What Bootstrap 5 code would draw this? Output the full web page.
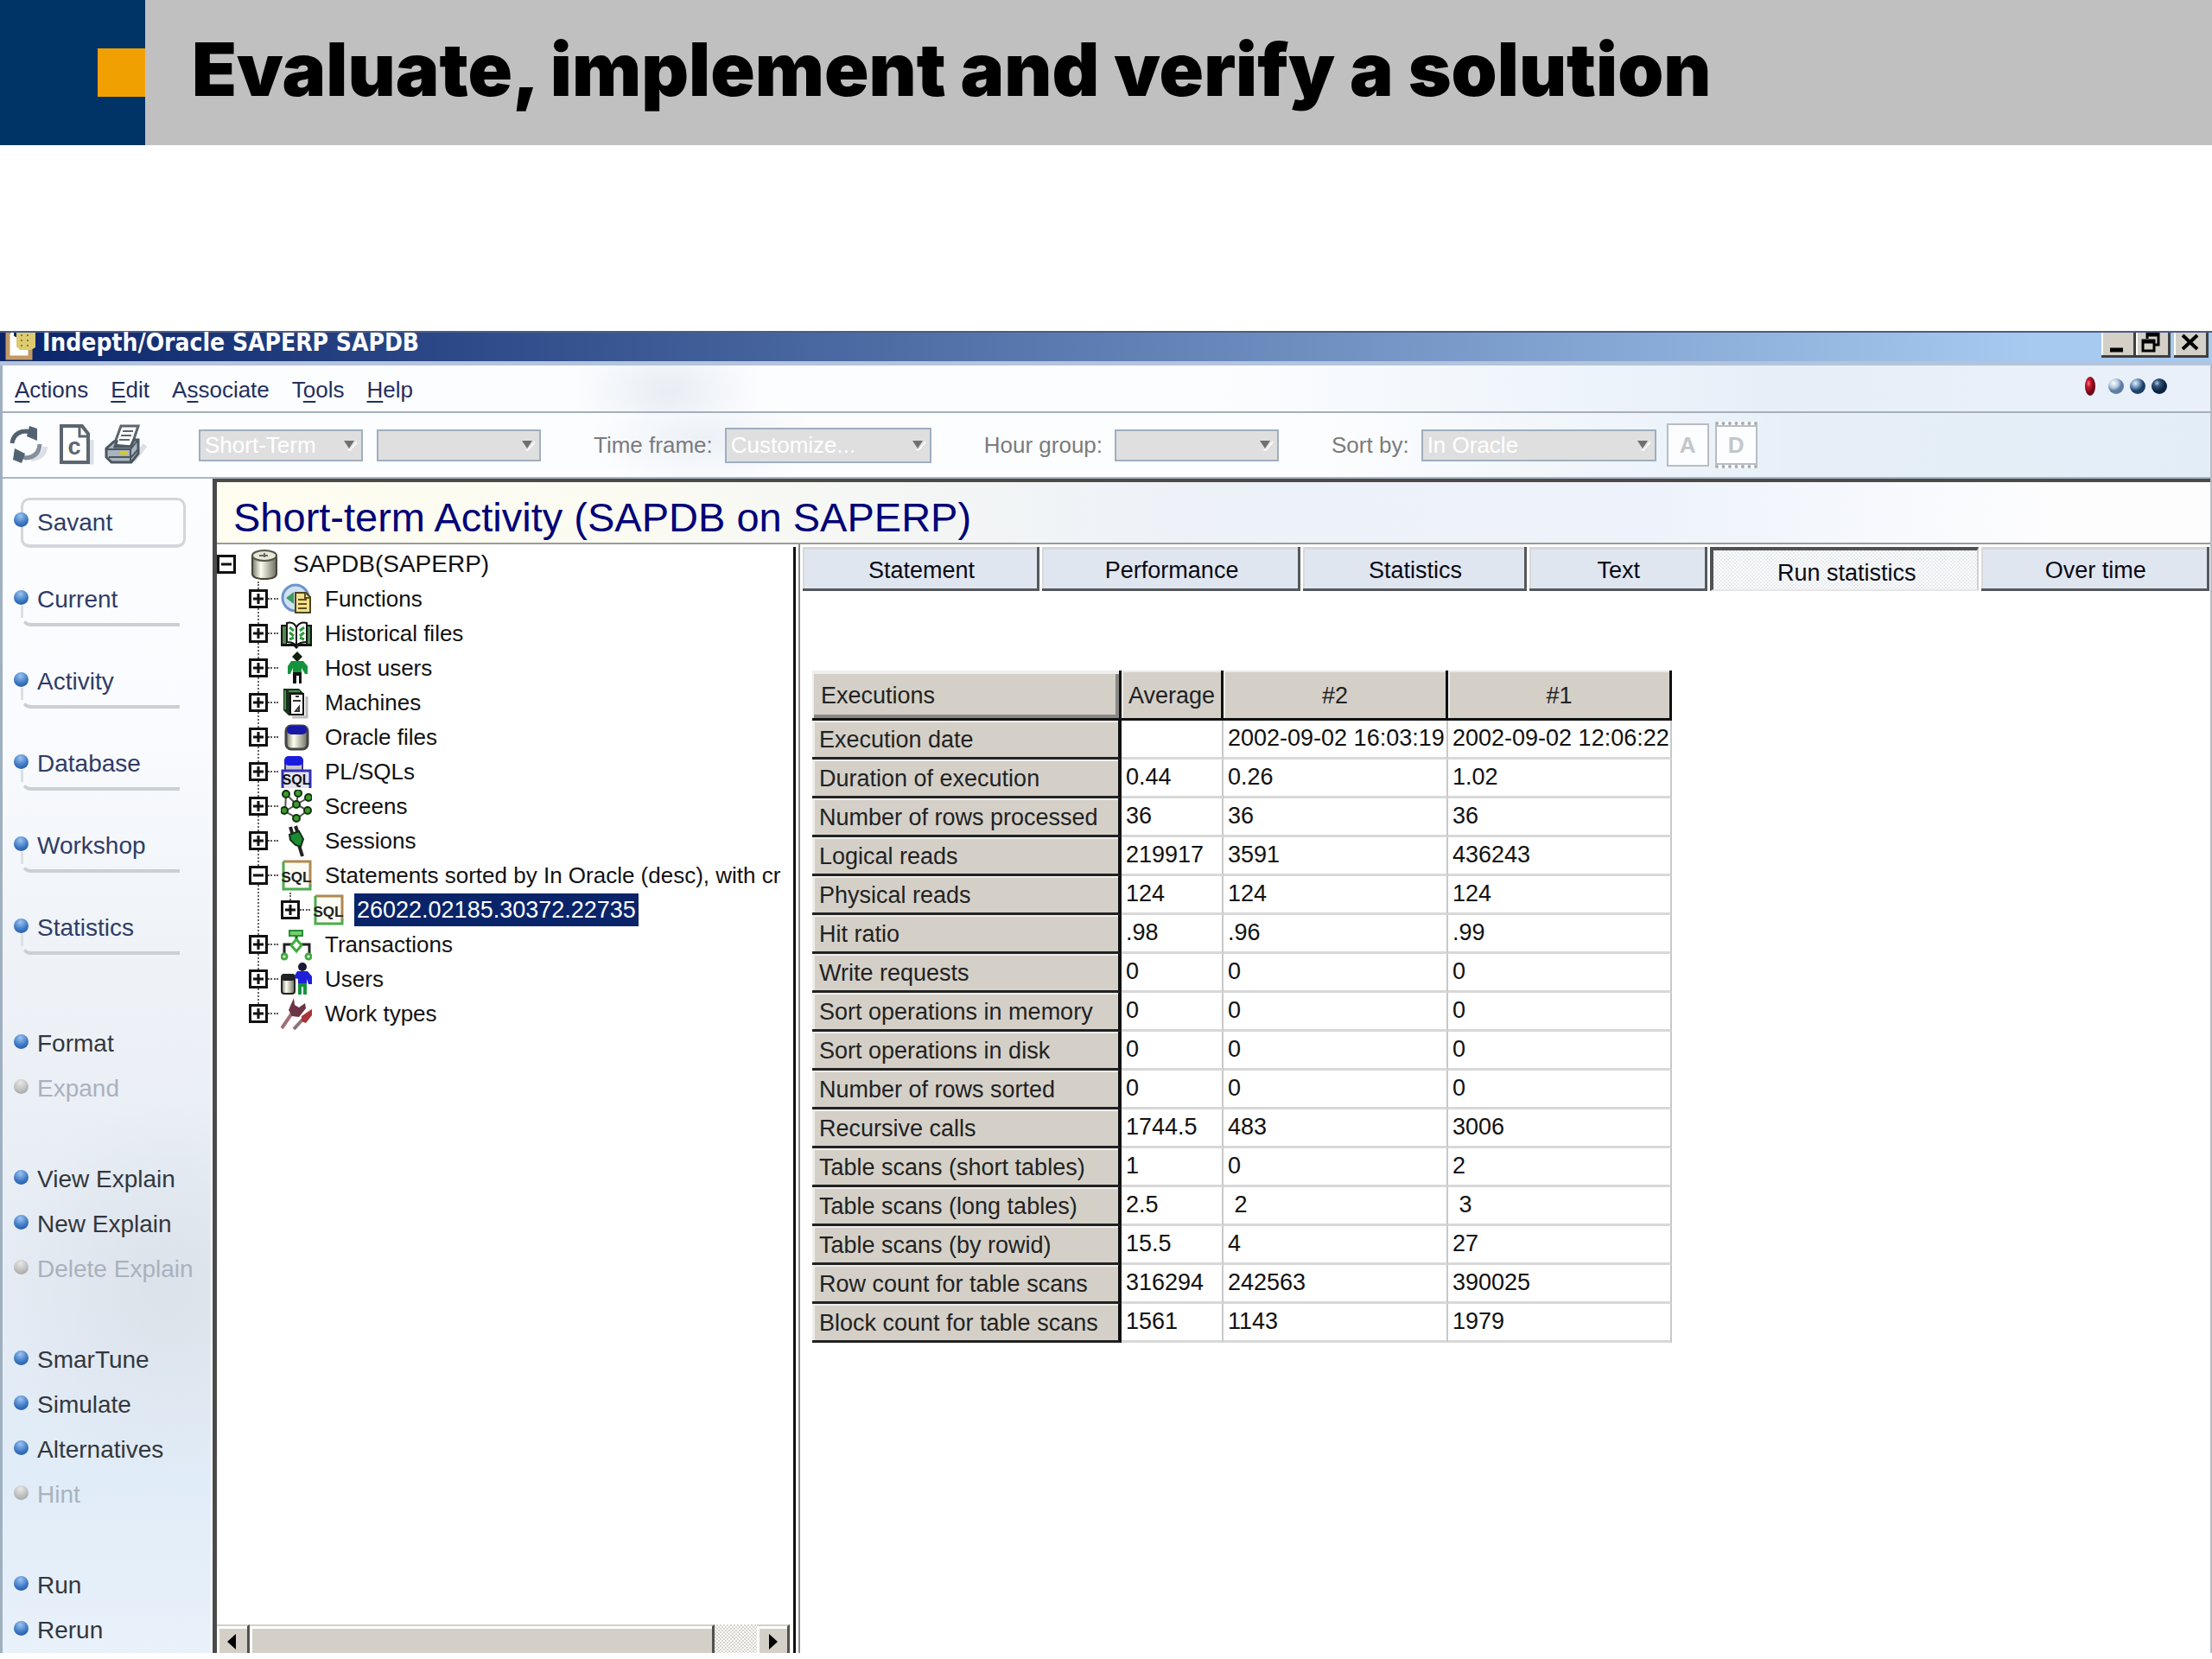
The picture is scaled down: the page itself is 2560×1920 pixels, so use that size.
<!DOCTYPE html>
<html lang="en">
<head>
<meta charset="utf-8">
<meta name="viewport" content="width=device-width, initial-scale=1">
<title>Indepth/Oracle SAPERP SAPDB</title>
<link rel="stylesheet" href="https://cdn.jsdelivr.net/npm/bootstrap@5.3.0/dist/css/bootstrap.min.css">
<style>
  body { font-family: "Liberation Sans", Arial, sans-serif; font-size: 27px; line-height: 32px; color: #111; background: #fff; padding-bottom: 7px; }
  button { font: inherit; color: inherit; padding: 0; }

  /* slide heading */
  .slide-head { height: 168px; background: #c0c0c0; margin-bottom: 215px; }
  .slide-mark { width: 168px; background: #003366; }
  .slide-mark span { width: 55px; height: 56px; background: #f0a000; }
  .slide-head h1 { font-family: Inter, "Liberation Sans", sans-serif; font-weight: 900; font-size: 85px; line-height: 96px; color: #000; margin: 0 0 6px 54px; }

  /* window frame */
  .title-bar { height: 40px; background: linear-gradient(90deg, #0a246a, #a6caf0 92%); border-top: 2px solid #4c5c84; border-bottom: 5px solid #b4c4dc; color: #fff; }
  .title-bar h2 { font-family: "DejaVu Sans Condensed", "DejaVu Sans", sans-serif; font-weight: 700; font-size: 28px; line-height: 24px; }
  .app-icon { width: 38px; height: 32px; margin: 0 7px 0 4px; }
  .win-btn { width: 40px; height: 29px; background: #d4d0c8; border: 0 solid #404040; border-width: 0 3px 3px 0; box-shadow: inset 2px 0 #fff; }
  .window-body { border-left: 3px solid #9fb0c0; border-right: 2px solid #b8bcc4; }
  .menu-bar { height: 55px; padding: 2px 50px 0 14px; color: #22305c; border-bottom: 2px solid #a4b0ba; font-size: 26px;
    background: radial-gradient(ellipse 110px 70px at 770px 30px, #e8edf3, #e8edf300), linear-gradient(90deg, #fcfdff 55%, #e6eff8 80%, #e9f0f9); }
  .menu-bar a { color: inherit; text-decoration: none; }
  .menu-bar u { text-underline-offset: 4px; }
  .tool-bar { height: 76px; padding-left: 7px; font-size: 26px; color: #7b7b7b; border-bottom: 2px solid #a9b6c2;
    background: radial-gradient(ellipse 130px 60px at 810px 30px, #ecf1f7, #ecf1f700), linear-gradient(90deg, #fcfdff 60%, #e6eff8 82%, #e3edf7); }
  .tool-bar select { height: 37px; width: 190px; padding: 0 30px 0 5px; font-size: 26px; line-height: 30px; border: 2px solid #9eafc0; border-radius: 0; color: #fff; opacity: 1;
    background: #dfdfe0 url("data:image/svg+xml,%3Csvg xmlns='http://www.w3.org/2000/svg' width='18' height='14'%3E%3Cpath d='M4 12h4l8-10v3l-8 9z' fill='%23fff'/%3E%3Cpath d='M1 2h12l-6 9z' fill='%23707070'/%3E%3C/svg%3E") no-repeat right 3px center; background-size: 18px 14px; }
  .tool-bar select:disabled { color: #fff; background-color: #dfdfe0; }
  .tool-bar label { padding: 0 14px 0 61px; }
  .tool-bar select.sel-time { width: 239px; height: 41px; }
  .tool-bar select.sel-sort { width: 272px; }
  .tool-ico { width: 46px; height: 52px; background: none; border: 0; }
  .sort-btn { width: 49px; height: 50px; background: #fcfdff; border: 2px solid #b9bdc2; color: #c3c6ca; font-weight: 700; }
  .sort-btn.sort-asc { margin: 0 7px 0 12px; }
  .sort-btn.sort-desc { border-top: 4px dotted #a8acb0; border-bottom: 4px dotted #a8acb0; height: 54px; box-shadow: inset 0 2px #b9bdc2, inset 0 -2px #b9bdc2; }

  /* side navigation */
  .side-nav { width: 243px; font-size: 28px; border-right: 2px solid #fff;
    background: radial-gradient(ellipse 200px 220px at 190px 940px, #dbe2ea, #dbe2ea00), linear-gradient(180deg, #fbfdff, #f9fbfe 22%, #eef2f7 42%, #e6ecf4 68%, #e0ecf8 85%, #e9f1fa); }
  .side-nav a { color: #33373d; text-decoration: none; padding: 2px 0 0 10px; }
  .side-nav a.off { color: #a9b2bd; }
  .side-nav .nav-cmd { height: 52px; }
  .side-nav .cmd-gap { margin-top: 53px; }
  .side-nav .cmd-first { margin-top: 76px; }
  .side-nav .nav-view { height: 58px; margin-top: 37px; }
  .side-nav .nav-view a { color: #2f3c66; }
  .side-nav .nav-view.view-top { margin-top: 22px; }
  .side-nav .nav-view.view-next { margin-top: 33px; }
  .side-nav .line-box { width: 184px; height: 58px; margin-left: 21px; border: 0 solid #cbced3; border-left: 3px solid transparent; border-bottom-width: 4px; border-radius: 4px 0 0 12px; padding-bottom: 2px; background: linear-gradient(#dcdfe3, #dcdfe3) no-repeat -3px 34px / 3px 14px; }
  .side-nav .line-box a { padding-left: 3px; }
  .line-box::before, .ball { content: ""; width: 17px; height: 17px; border-radius: 50%; flex: none; background: radial-gradient(circle at 45% 25%, #9cc4f0, #3c78c4 55%, #1d4a94); }
  .line-box::before { margin: 0 7px 4px -11px; }
  .side-nav .box-full { width: 191px; border: 3px solid #d3d6da; border-bottom-width: 4px; border-radius: 10px; background: #fbfdff; }
  .ball { margin: 0 0 4px 13px; }
  .ball.off { background: radial-gradient(circle at 45% 25%, #e8e8e8, #bdbdbd 55%, #9a9a9a); }

  /* main area */
  .main-area { border-left: 5px solid #4a4a4a; }
  .page-title { height: 76px; border-top: 4px solid #4a4a48; border-bottom: 2px solid #9a9a9a; padding: 11px 0 0 19px; background: linear-gradient(90deg, #fffdf0, #fbfbf2 20%, #edf1f8 50%, #eef3fb 72%, #fdfdfe 92%); }
  .page-title h3 { font-size: 47px; line-height: 56px; color: #000078; font-weight: 400; }
  .tree-pane { width: 675px; border-right: 2px solid #8c8c8c; padding-top: 3px; font-size: 26px; }
  .tree-inner { border-right: 3px solid #111; margin-right: 3px; }
  .tree-inner ul { list-style: none; margin: 0; padding: 0; }
  .tree-inner ul ul { padding-left: 37px; position: relative; }
  .tree-inner ul ul::before { content: ""; position: absolute; left: 47px; top: 0; bottom: 20px; border-left: 2px dotted #666; }
  .tree-inner ul ul ul::before { bottom: auto; height: 12px; }
  .tree-row { height: 40px; white-space: nowrap; position: relative; }
  .twist { width: 22px; height: 22px; border: 3px solid #111; background: #fff; flex: none; display: flex; }
  .twist svg { width: 16px; height: 16px; }
  .dash { width: 12px; height: 2px; border-top: 2px dotted #555; margin-right: 3px; flex: none; }
  .tree-row .t-ico { width: 36px; height: 38px; margin-right: 12px; flex: none; }
  .node-name { padding: 0 3px; line-height: 38px; }
  .node-name.root-name { font-size: 28px; }
  .node-name.picked { background: #0a246a; color: #fff; font-size: 27px; }

  .scroll-strip { height: 33px; margin-right: 4px; background: repeating-conic-gradient(#d8d4cc 0 25%, #fff 0 50%) 0 0 / 4px 4px; }
  .scroll-strip button, .scroll-thumb { border: 0 solid #505050; border-top: 2px solid #d4d0c8; border-right-width: 3px; background: #d4d0c8; box-shadow: inset 3px 3px #fff; }
  .scroll-strip button { width: 38px; }
  .scroll-thumb { width: 538px; }

  .tab-strip { padding: 3px 1px 0 3px; gap: 3px; height: 54px; }
  .tab-strip button { border: 0 solid #55585c; border-right-width: 3px; border-bottom-width: 3px; padding: 6px 0 0 4px; background: #e0e6ef; box-shadow: inset 2px 3px #d8d8d8; min-width: 0; white-space: nowrap; color: #0a0a14; }
  .tab-strip .tab-on { background: repeating-conic-gradient(#e8ebef 0 25%, #fbfcfd 0 50%) 0 0 / 4px 4px; border-width: 4px 2px 2px 4px; border-color: #505254 #d0d0d0 #e6e6e6 #505254; box-shadow: none; }

  .stat-grid { border-collapse: separate; border-spacing: 0; margin: 92px 0 0 14px; width: 995px; table-layout: fixed; line-height: 30px; }
  .stat-grid th { font-weight: 400; background: #d4d0c8; color: #222; }
  .stat-grid thead th { height: 58px; border-right: 3px solid #111; border-bottom: 3px solid #111; padding: 2px 3px 0 4px; text-align: center; box-shadow: inset 2px 2px #eceae6; }
  .stat-grid thead th:first-child { text-align: left; padding-left: 10px; box-shadow: inset 2px 4px #eee, inset -4px -4px #8a8884; }
  .stat-grid tbody th { height: 45px; padding: 2px 0 0 8px; border-right: 4px solid #111; border-bottom: 3px solid #222; box-shadow: inset 3px 2px #efedea; white-space: nowrap; }
  .stat-grid td { padding: 0 0 3px 5px; border-right: 2px solid #c8c8c8; border-bottom: 3px solid #d8d8d8; white-space: nowrap; color: #111; }
</style>
<script src="https://cdn.jsdelivr.net/npm/bootstrap@5.3.0/dist/js/bootstrap.bundle.min.js"></script>
</head>
<body class="d-flex flex-column min-vh-100">

<svg width="0" height="0" class="position-absolute" aria-hidden="true">
  <defs>
    <linearGradient id="steel"><stop offset="0" stop-color="#77776c"/><stop offset=".35" stop-color="#fffff0"/><stop offset="1" stop-color="#6c6c60"/></linearGradient>
    <radialGradient id="red" cx=".35" cy=".35"><stop offset="0" stop-color="#f08090"/><stop offset=".4" stop-color="#c81830"/><stop offset="1" stop-color="#700818"/></radialGradient>
    <radialGradient id="b1" cx=".35" cy=".3"><stop offset="0" stop-color="#fff"/><stop offset=".6" stop-color="#b4c8e0"/><stop offset="1" stop-color="#5c7ca4"/></radialGradient>
    <radialGradient id="b2" cx=".35" cy=".3"><stop offset="0" stop-color="#e4f0fc"/><stop offset=".5" stop-color="#7ca0c4"/><stop offset="1" stop-color="#1c4068"/></radialGradient>
    <radialGradient id="b3" cx=".35" cy=".3"><stop offset="0" stop-color="#b4cce4"/><stop offset=".4" stop-color="#34587c"/><stop offset="1" stop-color="#0c2444"/></radialGradient>
    <symbol id="plus" viewBox="0 0 16 16"><path d="M8 2v12M2 8h12" stroke="#111" stroke-width="3"/></symbol>
    <symbol id="minus" viewBox="0 0 16 16"><path d="M2 8h12" stroke="#111" stroke-width="3"/></symbol>
    <symbol id="sql" viewBox="0 0 36 38"><path d="M3 36V3h30v33z" fill="#fbfbf4"/><path d="M3 3h31v28" fill="none" stroke="#b08850" stroke-width="3"/><path d="M3 3v32h31v-5" fill="none" stroke="#4cac4c" stroke-width="3"/><text x="18" y="27" text-anchor="middle" font-family="Liberation Sans" font-size="17" font-weight="700" fill="#222">SQL</text></symbol>
  </defs>
</svg>

<header class="slide-head d-flex flex-shrink-0">
  <div class="slide-mark d-flex justify-content-end flex-shrink-0"><span class="mt-auto mb-auto"></span></div>
  <h1 class="align-self-center text-nowrap">Evaluate, implement and verify a solution</h1>
</header>

<div class="d-flex flex-column flex-grow-1">
  <div class="title-bar d-flex align-items-start flex-shrink-0 pe-1">
    <svg class="app-icon" viewBox="0 0 38 32"><path d="M5 0v29h26V14" fill="#fff" stroke="#c49a64" stroke-width="5"/><path d="M12 0v16h10v8H8V0z" fill="#fff"/><path d="M15 0h22v17l-5 3H19l-4-4z" fill="#dccb70"/><path d="M21 2v14M28 2v14" stroke="#8e7a20" stroke-width="2" stroke-dasharray="2 4"/></svg>
    <h2 class="m-0 me-auto">Indepth/Oracle SAPERP SAPDB</h2>
    <button class="win-btn d-flex" aria-label="Minimize"><svg width="37" height="26"><path d="M10 20h15" stroke="#000" stroke-width="5"/></svg></button>
    <button class="win-btn d-flex me-1" aria-label="Restore"><svg width="37" height="26"><path d="M13 7V1h13v13h-5M13 3h13M8 9h13v12H8zM8 11h13" fill="none" stroke="#000" stroke-width="3"/></svg></button>
    <button class="win-btn d-flex" aria-label="Close"><svg width="37" height="26"><path d="M10 3l17 16M27 3L10 19" stroke="#000" stroke-width="4"/></svg></button>
  </div>

  <div class="window-body d-flex flex-column flex-grow-1">
    <nav class="menu-bar d-flex align-items-center flex-shrink-0">
      <div class="d-flex me-auto" style="gap:26px">
        <a href="#"><u>A</u>ctions</a><a href="#"><u>E</u>dit</a><a href="#">A<u>s</u>sociate</a><a href="#">T<u>o</u>ols</a><a href="#"><u>H</u>elp</a>
      </div>
      <svg width="100" height="32" viewBox="0 0 100 32" aria-hidden="true"><ellipse cx="11" cy="12" rx="6" ry="11" fill="url(#red)"/><circle cx="41" cy="12" r="9" fill="url(#b1)"/><circle cx="66" cy="12" r="9" fill="url(#b2)"/><circle cx="91" cy="12" r="9" fill="url(#b3)"/></svg>
    </nav>

    <form class="tool-bar d-flex align-items-center flex-shrink-0 text-nowrap">
      <button type="button" class="tool-ico" aria-label="Refresh"><svg width="46" height="52"><path d="M26 42q16-2 16-14" stroke="#dce0e6" stroke-width="6" fill="none"/><path d="M4 24Q6 10 21 10l8 3" fill="none" stroke="#526270" stroke-width="5"/><path d="M24 4l9 3v14l-12-5z" fill="#526270"/><path d="M36 25q-1 15-16 16l-8-3" fill="none" stroke="#84909c" stroke-width="5"/><path d="M15 47L5 43l2-13 12 6z" fill="#526270"/></svg></button>
      <button type="button" class="tool-ico ms-2" aria-label="Copy"><svg width="46" height="52"><path d="M10 46h32V20" fill="none" stroke="#dce0e6" stroke-width="5"/><path d="M7 4h24l7 9v33H7z" fill="#fff" stroke="#5c6670" stroke-width="4"/><path d="M28 4v12h10" fill="none" stroke="#5c6670" stroke-width="3"/><text x="22" y="37" text-anchor="middle" font-family="Liberation Sans" font-size="27" font-weight="700" fill="#5c6670">c</text></svg></button>
      <button type="button" class="tool-ico ms-2" aria-label="Print"><svg width="52" height="52" viewBox="0 0 52 52"><path d="M36 44l14-18" stroke="#dce0e6" stroke-width="6"/><path d="M14 26L22 4h20l-8 24z" fill="#fff" stroke="#5c6670" stroke-width="3"/><path d="M24 10h12M22 15h12M20 20h12" stroke="#5c6670" stroke-width="2"/><path d="M5 30l9-8h3l-2 6h18l4-8h5v16l-8 10H11l-6-6z" fill="#aab4be" stroke="#4c5660" stroke-width="3"/><path d="M5 31h28l8-10M8 40h26l8-9M33 31v14" fill="none" stroke="#4c5660" stroke-width="2"/><path d="M21 35h9" stroke="#d8cc20" stroke-width="4"/></svg></button>
      <select class="form-select" aria-label="Term" disabled style="margin-left:66px"><option>Short-Term</option></select>
      <select class="form-select ms-3" aria-label="Period" disabled><option></option></select>
      <label for="tf">Time frame:</label><select id="tf" class="form-select sel-time" disabled><option>Customize...</option></select>
      <label for="hg">Hour group:</label><select id="hg" class="form-select" disabled><option></option></select>
      <label for="sb">Sort by:</label><select id="sb" class="form-select sel-sort" disabled><option>In Oracle</option></select>
      <button type="button" class="sort-btn sort-asc" disabled>A</button><button type="button" class="sort-btn sort-desc" disabled>D</button>
    </form>

    <div class="d-flex flex-grow-1">
      <nav class="side-nav d-flex flex-column flex-shrink-0 text-nowrap">
        <div class="nav-view view-top"><div class="line-box box-full d-flex align-items-center"><a href="#">Savant</a></div></div>
        <div class="nav-view view-next"><div class="line-box d-flex align-items-center"><a href="#">Current</a></div></div>
        <div class="nav-view"><div class="line-box d-flex align-items-center"><a href="#">Activity</a></div></div>
        <div class="nav-view"><div class="line-box d-flex align-items-center"><a href="#">Database</a></div></div>
        <div class="nav-view"><div class="line-box d-flex align-items-center"><a href="#">Workshop</a></div></div>
        <div class="nav-view"><div class="line-box d-flex align-items-center"><a href="#">Statistics</a></div></div>
        <div class="nav-cmd cmd-first d-flex align-items-center"><span class="ball"></span><a href="#">Format</a></div>
        <div class="nav-cmd d-flex align-items-center"><span class="ball off"></span><a href="#" class="off">Expand</a></div>
        <div class="nav-cmd cmd-gap d-flex align-items-center"><span class="ball"></span><a href="#">View Explain</a></div>
        <div class="nav-cmd d-flex align-items-center"><span class="ball"></span><a href="#">New Explain</a></div>
        <div class="nav-cmd d-flex align-items-center"><span class="ball off"></span><a href="#" class="off">Delete Explain</a></div>
        <div class="nav-cmd cmd-gap d-flex align-items-center"><span class="ball"></span><a href="#">SmarTune</a></div>
        <div class="nav-cmd d-flex align-items-center"><span class="ball"></span><a href="#">Simulate</a></div>
        <div class="nav-cmd d-flex align-items-center"><span class="ball"></span><a href="#">Alternatives</a></div>
        <div class="nav-cmd d-flex align-items-center"><span class="ball off"></span><a href="#" class="off">Hint</a></div>
        <div class="nav-cmd cmd-gap d-flex align-items-center"><span class="ball"></span><a href="#">Run</a></div>
        <div class="nav-cmd d-flex align-items-center"><span class="ball"></span><a href="#">Rerun</a></div>
      </nav>

      <main class="main-area d-flex flex-column flex-grow-1">
        <div class="page-title d-flex align-items-center"><h3 class="m-0">Short-term Activity (SAPDB on SAPERP)</h3></div>
        <div class="d-flex flex-grow-1">
          <section class="tree-pane d-flex flex-column flex-shrink-0">
            <div class="tree-inner d-flex flex-column flex-grow-1">
              <ul class="flex-grow-1">
                <li>
                  <div class="tree-row d-flex align-items-center"><button class="twist" aria-label="Collapse"><svg><use href="#minus"/></svg></button><span class="dash border-0"></span><svg class="t-ico" viewBox="0 0 36 38"><path d="M4 9v21q0 6 14 6t14-6V9z" fill="url(#steel)" stroke="#444438" stroke-width="2"/><ellipse cx="18" cy="9" rx="14" ry="6" fill="#e8e8d8" stroke="#55554a" stroke-width="2"/><path d="M12 9h10M18 6v5" stroke="#666" stroke-width="2"/></svg><span class="node-name root-name">SAPDB(SAPERP)</span></div>
                  <ul>
                    <li class="tree-row d-flex align-items-center"><button class="twist" aria-label="Expand"><svg><use href="#plus"/></svg></button><span class="dash"></span><svg class="t-ico" viewBox="0 0 36 38"><circle cx="17" cy="18" r="15" fill="#cfe0f4" stroke="#6c94c8" stroke-width="3"/><path d="M6 18l9-7v14z" fill="#3c9c5c"/><path d="M17 12h12l5 5v18H17z" fill="#f4e08c" stroke="#4c4420" stroke-width="2"/><path d="M20 20h10M20 25h10M20 30h10M28 12v6h6" stroke="#5c5020" stroke-width="2" fill="none"/></svg><span class="node-name">Functions</span></li>
                    <li class="tree-row d-flex align-items-center"><button class="twist" aria-label="Expand"><svg><use href="#plus"/></svg></button><span class="dash"></span><svg class="t-ico" viewBox="0 0 36 38"><path d="M0 9h7v22h10l2 3 2-3h8V9h7v25H21l-3 3-3-3H0z" fill="#111"/><path d="M2 11h4v20H2zM31 11h3v20h-3z" fill="#4c8c50"/><path d="M7 7q8-2 11 5 4-7 12-5v22q-8 0-12 4-4-4-11-4z" fill="#fff" stroke="#111" stroke-width="2"/><path d="M10 12l5 4M10 18l5 4M10 26l5-2M27 12l-5 4M27 18l-5 4M27 26l-5-2" stroke="#2c9c3c" stroke-width="3"/><path d="M18 12v20" stroke="#111" stroke-width="2"/></svg><span class="node-name">Historical files</span></li>
                    <li class="tree-row d-flex align-items-center"><button class="twist" aria-label="Expand"><svg><use href="#plus"/></svg></button><span class="dash"></span><svg class="t-ico" viewBox="0 0 36 38"><path d="M19 0l6 6-6 6-6-6z" fill="#102010"/><path d="M12 11h14l5 6v9h-3l-4-7v6H14v-6l-3 7H8v-9z" fill="#14943c"/><path d="M14 24h10v13h-3V28h-3v9h-4z" fill="#111"/></svg><span class="node-name">Host users</span></li>
                    <li class="tree-row d-flex align-items-center"><button class="twist" aria-label="Expand"><svg><use href="#plus"/></svg></button><span class="dash"></span><svg class="t-ico" viewBox="0 0 36 38"><path d="M13 36h17V12" stroke="#bbb" stroke-width="3" fill="none"/><path d="M3 3h18l6 6v25H9l-6-6z" fill="#18301c"/><path d="M5 5v22M9 6h13" stroke="#489050" stroke-width="2"/><path d="M11 9h15v24H11z" fill="#fff" stroke="#111" stroke-width="2"/><path d="M14 17h9M17 12h4M17 29l4-5v5z" stroke="#333" stroke-width="2" fill="none"/></svg><span class="node-name">Machines</span></li>
                    <li class="tree-row d-flex align-items-center"><button class="twist" aria-label="Expand"><svg><use href="#plus"/></svg></button><span class="dash"></span><svg class="t-ico" viewBox="0 0 36 38"><rect x="6" y="6" width="25" height="27" rx="6" fill="url(#steel)" stroke="#444" stroke-width="3"/><rect x="7" y="6" width="23" height="10" rx="5" fill="#1818a8"/></svg><span class="node-name">Oracle files</span></li>
                    <li class="tree-row d-flex align-items-center"><button class="twist" aria-label="Expand"><svg><use href="#plus"/></svg></button><span class="dash"></span><svg class="t-ico" viewBox="0 0 36 38"><rect x="5" y="2" width="20" height="22" rx="6" fill="#c4c4cc" stroke="#3c3c8c" stroke-width="2"/><rect x="4" y="1" width="22" height="11" rx="5" fill="#1c1ce0"/><path d="M2 38V18h32v20" fill="#e4e4f4" stroke="#3030b8" stroke-width="3"/><text x="18" y="34" text-anchor="middle" font-family="Liberation Sans" font-size="16" font-weight="700" fill="#111">SQL</text></svg><span class="node-name">PL/SQLs</span></li>
                    <li class="tree-row d-flex align-items-center"><button class="twist" aria-label="Expand"><svg><use href="#plus"/></svg></button><span class="dash"></span><svg class="t-ico" viewBox="0 0 36 38"><path d="M6 5l12 12L32 9M18 17L5 25l14 8 12-9M20 4l-2 13 13 7M5 25L6 5" fill="none" stroke="#555" stroke-width="2"/><g fill="#3c9c2c" stroke="#123010" stroke-width="2"><circle cx="6" cy="5" r="4"/><circle cx="20" cy="4" r="4"/><circle cx="32" cy="9" r="4"/><circle cx="18" cy="17" r="4"/><circle cx="4" cy="24" r="4"/><circle cx="31" cy="24" r="4"/><circle cx="18" cy="33" r="4"/></g></svg><span class="node-name">Screens</span></li>
                    <li class="tree-row d-flex align-items-center"><button class="twist" aria-label="Expand"><svg><use href="#plus"/></svg></button><span class="dash"></span><svg class="t-ico" viewBox="0 0 36 38"><path d="M11 3l3 10M17 2l3 9M21 24l4 13" stroke="#222" stroke-width="4"/><path d="M10 12l11-4 5 9-3 9-6-2-6-6z" fill="#1c8c34" stroke="#103018" stroke-width="2"/></svg><span class="node-name">Sessions</span></li>
                    <li>
                      <div class="tree-row d-flex align-items-center"><button class="twist" aria-label="Collapse"><svg><use href="#minus"/></svg></button><span class="dash"></span><svg class="t-ico"><use href="#sql"/></svg><span class="node-name">Statements sorted by In Oracle (desc), with cr</span></div>
                      <ul><li class="tree-row d-flex align-items-center"><button class="twist" aria-label="Expand"><svg><use href="#plus"/></svg></button><span class="dash"></span><svg class="t-ico"><use href="#sql"/></svg><span class="node-name picked">26022.02185.30372.22735</span></li></ul>
                    </li>
                    <li class="tree-row d-flex align-items-center"><button class="twist" aria-label="Expand"><svg><use href="#plus"/></svg></button><span class="dash"></span><svg class="t-ico" viewBox="0 0 36 38"><path d="M18 7v8M14 19H4v11M22 19h11v11" fill="none" stroke="#222" stroke-width="3"/><path d="M10 3h15v6H10z" fill="#70d070" stroke="#2c8c34" stroke-width="2"/><path d="M18 13l6 7-6 7-6-7z" fill="#fff" stroke="#3cac3c" stroke-width="3"/><circle cx="4" cy="33" r="3" fill="#fff" stroke="#3cac3c" stroke-width="3"/><circle cx="32" cy="33" r="3" fill="#fff" stroke="#3cac3c" stroke-width="3"/></svg><span class="node-name">Transactions</span></li>
                    <li class="tree-row d-flex align-items-center"><button class="twist" aria-label="Expand"><svg><use href="#plus"/></svg></button><span class="dash"></span><svg class="t-ico" viewBox="0 0 36 38"><rect x="1" y="14" width="15" height="22" rx="3" fill="url(#steel)" stroke="#222" stroke-width="2"/><rect x="1" y="13" width="15" height="8" rx="3" fill="#222"/><circle cx="25" cy="5" r="5" fill="#181838"/><path d="M19 10h12l5 6v9h-4l-2-6v6H20v-6l-4-1v-3z" fill="#2020d8"/><path d="M20 24h10v13h-4V28h-2v9h-4z" fill="#14943c"/></svg><span class="node-name">Users</span></li>
                    <li class="tree-row d-flex align-items-center"><button class="twist" aria-label="Expand"><svg><use href="#plus"/></svg></button><span class="dash"></span><svg class="t-ico" viewBox="0 0 36 38"><path d="M1 36L14 17" stroke="#a07078" stroke-width="4"/><path d="M15 1l1 8 5 3 7-5 1 6-8 10-8-1-4-7z" fill="#6c3444"/><path d="M15 37l10-11" stroke="#8c7478" stroke-width="4"/><path d="M37 13L24 22l0 6 5 2 7-9z" fill="#a83438"/></svg><span class="node-name">Work types</span></li>
                  </ul>
                </li>
              </ul>
              <div class="scroll-strip d-flex">
                <button aria-label="Scroll left"><svg width="32" height="28"><path d="M20 5v18l-10-9z"/></svg></button>
                <div class="scroll-thumb me-auto"></div>
                <button aria-label="Scroll right"><svg width="32" height="28"><path d="M12 5v18l10-9z"/></svg></button>
              </div>
            </div>
          </section>

          <section class="flex-grow-1 d-flex flex-column">
            <div class="tab-strip d-flex" role="tablist">
              <button role="tab" style="flex:275 1 0">Statement</button>
              <button role="tab" style="flex:301 1 0">Performance</button>
              <button role="tab" style="flex:259 1 0">Statistics</button>
              <button role="tab" style="flex:205 1 0">Text</button>
              <button role="tab" class="tab-on" aria-selected="true" style="flex:310 1 0">Run statistics</button>
              <button role="tab" style="flex:265 1 0">Over time</button>
            </div>
            <table class="stat-grid">
              <colgroup><col style="width:358px"><col style="width:118px"><col style="width:260px"><col style="width:259px"></colgroup>
              <thead><tr><th scope="col">Executions</th><th scope="col">Average</th><th scope="col">#2</th><th scope="col">#1</th></tr></thead>
              <tbody>
                <tr><th scope="row">Execution date</th><td></td><td>2002-09-02 16:03:19</td><td>2002-09-02 12:06:22</td></tr>
                <tr><th scope="row">Duration of execution</th><td>0.44</td><td>0.26</td><td>1.02</td></tr>
                <tr><th scope="row">Number of rows processed</th><td>36</td><td>36</td><td>36</td></tr>
                <tr><th scope="row">Logical reads</th><td>219917</td><td>3591</td><td>436243</td></tr>
                <tr><th scope="row">Physical reads</th><td>124</td><td>124</td><td>124</td></tr>
                <tr><th scope="row">Hit ratio</th><td>.98</td><td>.96</td><td>.99</td></tr>
                <tr><th scope="row">Write requests</th><td>0</td><td>0</td><td>0</td></tr>
                <tr><th scope="row">Sort operations in memory</th><td>0</td><td>0</td><td>0</td></tr>
                <tr><th scope="row">Sort operations in disk</th><td>0</td><td>0</td><td>0</td></tr>
                <tr><th scope="row">Number of rows sorted</th><td>0</td><td>0</td><td>0</td></tr>
                <tr><th scope="row">Recursive calls</th><td>1744.5</td><td>483</td><td>3006</td></tr>
                <tr><th scope="row">Table scans (short tables)</th><td>1</td><td>0</td><td>2</td></tr>
                <tr><th scope="row">Table scans (long tables)</th><td>2.5</td><td>&nbsp;2</td><td>&nbsp;3</td></tr>
                <tr><th scope="row">Table scans (by rowid)</th><td>15.5</td><td>4</td><td>27</td></tr>
                <tr><th scope="row">Row count for table scans</th><td>316294</td><td>242563</td><td>390025</td></tr>
                <tr><th scope="row">Block count for table scans</th><td>1561</td><td>1143</td><td>1979</td></tr>
              </tbody>
            </table>
          </section>
        </div>
      </main>
    </div>
  </div>
</div>
</body>
</html>
